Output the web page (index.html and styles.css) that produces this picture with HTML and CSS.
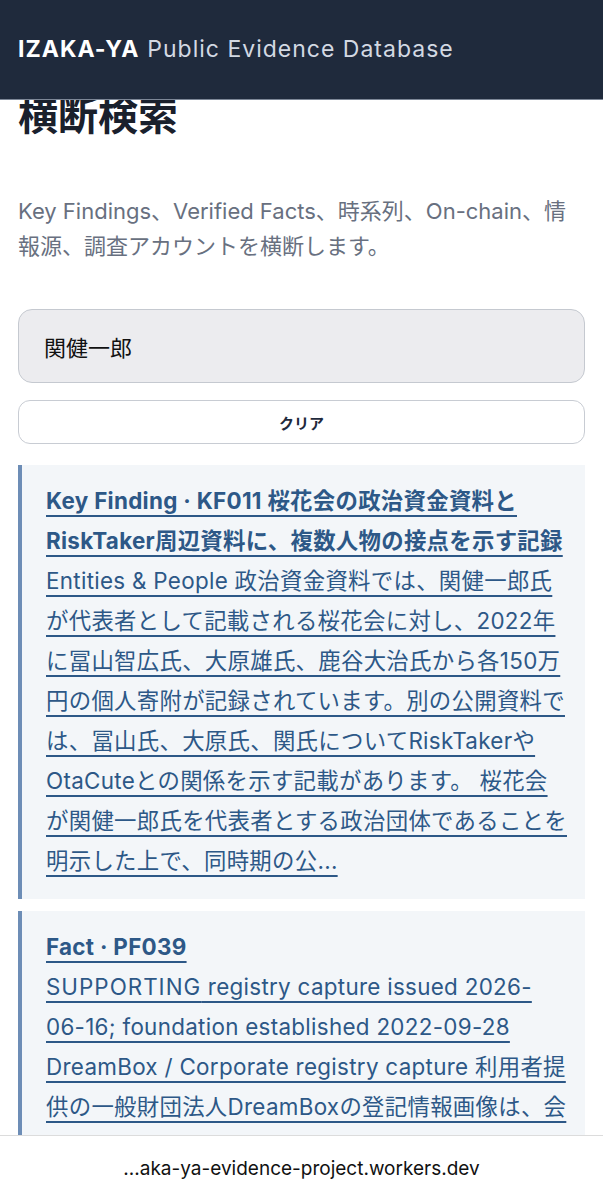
FILE: index.html
```html
<!DOCTYPE html>
<html lang="ja">
<head>
    <meta charset="utf-8">
    <title>横断検索 - IZAKA-YA Public Evidence Database</title>
    <link rel="stylesheet" href="styles.css">
</head>
<body>
    <header class="site-header">
        <span class="brand">IZAKA-YA</span>
        <span class="brand-sub">Public Evidence Database</span>
    </header>

    <div class="viewport">
        <main class="page">
            <h1>横断検索</h1>
            <p class="lead">Key Findings、Verified Facts、時系列、On-chain、情報源、調査アカウントを横断します。</p>

            <div class="search">
                <input class="search-input" type="text" value="関健一郎">
                <button class="clear-btn" type="button">クリア</button>
            </div>

            <div class="results">
                <a class="result" href="#">
                    <span class="result-title">Key Finding · KF011 桜花会の政治資金資料とRiskTaker周辺資料に、複数人物の接点を示す記録</span>
                    <span class="result-body">Entities &amp; People 政治資金資料では、関健一郎氏が代表者として記載される桜花会に対し、2022年に冨山智広氏、大原雄氏、鹿谷大治氏から各150万円の個人寄附が記録されています。別の公開資料では、冨山氏、大原氏、関氏についてRiskTakerやOtaCuteとの関係を示す記載があります。 桜花会が関健一郎氏を代表者とする政治団体であることを明示した上で、同時期の公...</span>
                </a>
                <a class="result" href="#">
                    <span class="result-title">Fact · PF039</span>
                    <span class="result-body"><span class="status">SUPPORTING</span> registry capture issued 2026-06-16; foundation established 2022-09-28</span>
                    <span class="result-body">DreamBox / Corporate registry capture 利用者提供の一般財団法人DreamBoxの登記情報画像は、会社法人等番号、名称、主たる事務所、設立日を示しています。</span>
                </a>
            </div>
        </main>
    </div>

    <div class="url-bar">...aka-ya-evidence-project.workers.dev</div>
</body>
</html>
```

FILE: styles.css
```css
body {
    margin: 0;
    padding: 0;
    height: 100vh;
    display: flex;
    flex-direction: column;
    font-family: Inter, 'Noto Sans CJK JP', sans-serif;
    background: #fff;
    color: #1a202c;
    overflow: hidden;
}

.site-header {
    flex: none;
    height: 100px;
    box-sizing: border-box;
    padding: 0 18px 1px;
    display: flex;
    align-items: center;
    gap: 8px;
    background: #1f2a3c;
    border-bottom: 1px solid #7d8797;
    font-size: 23px;
    letter-spacing: 1px;
}

.brand {
    color: #fff;
    font-weight: 700;
}

.brand-sub {
    color: #d3d9e3;
}

.viewport {
    flex: 1;
    overflow: hidden;
}

.page {
    margin-top: -8px;
    padding: 0 18px;
}

h1 {
    margin: 0 0 54px;
    font-size: 40px;
    line-height: 48px;
    font-weight: 700;
    color: #1a202c;
}

.lead {
    margin: 0 0 45px;
    font-size: 22px;
    line-height: 35px;
    color: #687080;
}

.search {
    display: flex;
    flex-direction: column;
    gap: 17px;
}

.search-input {
    height: 74px;
    box-sizing: border-box;
    padding: 0 25px;
    border: 1.5px solid #c5c9d0;
    border-radius: 14px;
    background: #ececef;
    font-family: inherit;
    font-size: 22px;
    color: #111;
}

.clear-btn {
    height: 44px;
    border: 1.5px solid #c8ccd3;
    border-radius: 12px;
    background: #fff;
    font-family: inherit;
    font-size: 15px;
    font-weight: 700;
    color: #1f2a3c;
}

.results {
    margin-top: 21px;
    display: flex;
    flex-direction: column;
    gap: 12px;
}

.result {
    display: block;
    padding: 16px 16px 18px 24px;
    border-left: 4px solid #6d8db6;
    background: #f3f6f9;
    color: #2d5887;
    font-size: 22.4px;
    line-height: 40px;
    letter-spacing: 0.3px;
    text-decoration: underline;
    text-decoration-thickness: 2px;
    text-underline-offset: 6px;
}

.result-title,
.result-body {
    display: block;
}

.result-title {
    font-weight: 700;
}

.status {
    letter-spacing: 1px;
}

.url-bar {
    flex: none;
    height: 65px;
    box-sizing: border-box;
    display: flex;
    align-items: center;
    justify-content: center;
    background: #fff;
    border-top: 1px solid #dcdcdc;
    font-size: 19px;
    color: #111;
}
```
